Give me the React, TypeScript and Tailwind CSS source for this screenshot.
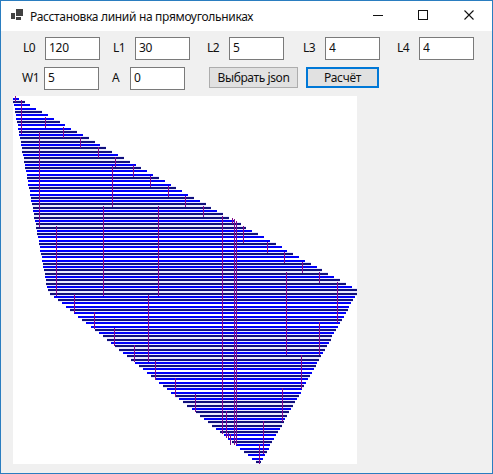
import React from 'react';

type FieldProps = { label: string; value: string; labelClass: string };

function Field({ label, value, labelClass }: FieldProps) {
  return (
    <label className="flex h-[23px] shrink-0">
      <span className={`shrink-0 pt-[2px] leading-[17px] ${labelClass}`}>{label}</span>
      <input
        defaultValue={value}
        className="h-[23px] w-[55px] border border-[#7a7a7a] bg-white pb-[2px] pl-[3px] tracking-[-0.3px] text-[#111] outline-none"
      />
    </label>
  );
}

const lines = Array.from({ length: 111 }, (_, n) => {
  const y = Math.floor(98.31 + 3.3 * n);
  const left = n < 59 ? Math.floor(13.2 + 0.6 * n) : Math.floor(50.6 + 4.04 * (n - 59));
  const right = n < 59 ? Math.round(18.7 + 5.84 * n) : Math.round(340 - 1.88 * (n - 68));
  return { y, left, right };
});

// Vertical connectors: x, top, bottom
const connectors = [
  [15, 96, 102], [21, 100, 134], [45, 117, 128], [63, 127, 138], [80, 137, 148],
  [98, 147, 158], [115, 157, 167], [39, 132, 227], [112, 166, 207], [103, 206, 296],
  [56, 226, 296], [74, 294, 313], [94, 312, 329], [114, 328, 346], [134, 345, 362],
  [148, 295, 362], [155, 361, 380], [133, 165, 177], [150, 176, 187], [168, 186, 197],
  [185, 196, 207], [203, 206, 217], [158, 206, 296], [222, 216, 434], [232, 218, 224],
  [234, 219, 445], [236, 221, 445], [243, 226, 243], [267, 242, 253], [284, 252, 263],
  [302, 262, 273], [319, 272, 283], [286, 272, 355], [337, 282, 323], [319, 322, 355],
  [175, 378, 397], [195, 394, 412], [226, 411, 438], [228, 433, 438], [230, 434, 445],
  [301, 355, 389], [282, 388, 422], [263, 421, 454], [259, 444, 464],
];

function Drawing() {
  return (
    <svg
      className="ml-3 block bg-white"
      width="344"
      height="368"
      viewBox="13 96 344 368"
      shapeRendering="crispEdges"
    >
      {lines.filter((l) => l.y % 2 === 1).map((l) => (
        <rect key={l.y} x={l.left} y={l.y - 1} width={l.right - l.left} height={4} fill="#eaeaff" />
      ))}
      {lines.map((l) => (
        <rect
          key={l.y}
          x={l.left}
          y={l.y}
          width={l.right - l.left}
          height={2}
          fill={l.y % 2 ? '#10107c' : '#0000fa'}
        />
      ))}
      {connectors.map(([x, top, bottom], i) => (
        <rect key={i} x={x} y={top} width={1} height={bottom - top} fill="#820a8c" />
      ))}
    </svg>
  );
}

export default function App() {
  return (
    <div className="flex h-[474px] w-[493px] flex-col overflow-hidden border border-[#2a7dc0] bg-[#f0f0f0] font-['Noto_Sans','Open_Sans',sans-serif] text-[12px] text-[#111]">
      <header className="flex h-[30px] shrink-0 items-center bg-white">
        <svg className="mb-[3px] ml-[10px]" width="12" height="11" viewBox="0 0 12 11" shapeRendering="crispEdges">
          <path fill="#424242" d="M5 0h7v7H5zM0 4h4v6H0zM5 8h5v3H5z" />
        </svg>
        <h1 className="ml-[7px] w-[320px] whitespace-nowrap text-[12px] leading-[17px] tracking-[-0.32px]">
          Расстановка линий на прямоугольниках
        </h1>
        <svg className="mb-[2px] ml-[22px]" width="104" height="12" viewBox="372 9 104 12" fill="none" stroke="#111">
          <path d="M373 15.5h10M418.5 10.5h9v9h-9z" shapeRendering="crispEdges" />
          <path d="M464.5 10.5l9 9M473.5 10.5l-9 9" strokeWidth="1.1" />
        </svg>
      </header>
      <main>
        <div className="flex pt-[6px] pl-[22px]">
          <Field label="L0" value="120" labelClass="w-[22px] tracking-[-0.5px]" />
          <Field label="L1" value="30" labelClass="ml-[13px] w-[22px] tracking-[-0.5px]" />
          <Field label="L2" value="5" labelClass="ml-[17px] w-[22px] tracking-[-0.5px]" />
          <Field label="L3" value="4" labelClass="ml-[19px] w-[22px] tracking-[-0.5px]" />
          <Field label="L4" value="4" labelClass="ml-[17px] w-[22px] tracking-[-0.5px]" />
        </div>
        <div className="flex pt-[7px] pl-[21px]">
          <Field label="W1" value="5" labelClass="w-[22px] tracking-[-0.5px]" />
          <Field label="A" value="0" labelClass="ml-[13px] w-[18px]" />
          <button className="ml-[24px] h-[21px] w-[89px] border border-[#adadad] bg-[#e1e1e1] pb-px leading-[17px] tracking-[-0.4px] whitespace-nowrap">
            Выбрать json
          </button>
          <button className="ml-[8px] h-[21px] w-[73px] border-2 border-[#0078d7] bg-[#e1e1e1] pb-px leading-[15px] tracking-[-0.3px]">
            Расчёт
          </button>
        </div>
        <div className="pt-[6px]">
          <Drawing />
        </div>
      </main>
    </div>
  );
}
